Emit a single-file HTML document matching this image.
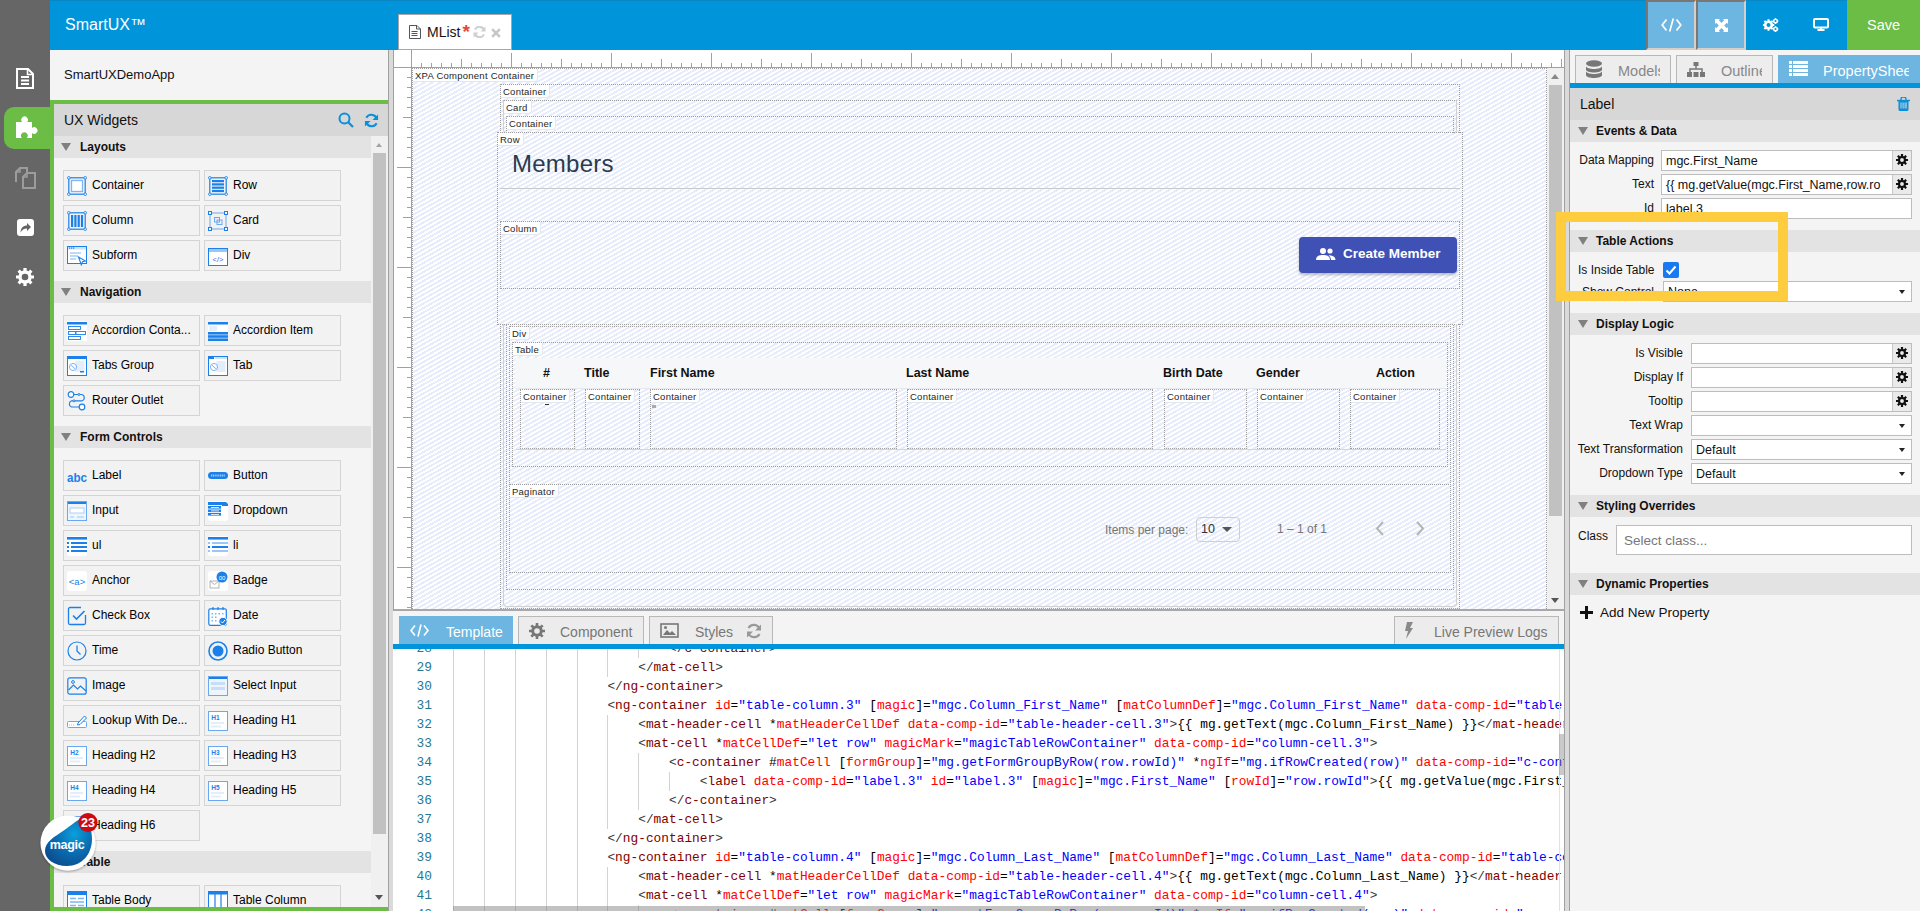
<!DOCTYPE html><html><head><meta charset="utf-8"><style>
*{box-sizing:border-box;margin:0;padding:0}
html,body{width:1920px;height:911px;overflow:hidden;background:#f4f4f4;font-family:"Liberation Sans",sans-serif;color:#222;position:relative}
.a{position:absolute}
.t{position:absolute;white-space:nowrap;line-height:1}
.wi{position:absolute;width:137px;height:31px;border:1px solid #d4d4d4;background:#f2f2f2}
.wi span{position:absolute;left:28px;top:7px;font-size:12px;color:#000;white-space:nowrap;line-height:14px}
.wi svg{position:absolute;left:3px;top:5px}
.sh{position:absolute;left:54px;width:317px;height:22px;background:#e3e3e3}
.sh b{position:absolute;left:26px;top:4px;font-size:12px;color:#111;line-height:15px}
.tri{position:absolute;width:0;height:0;border-left:5.5px solid transparent;border-right:5.5px solid transparent;border-top:8px solid #808080}
.cl{position:absolute;font-size:9.5px;letter-spacing:.25px;line-height:12px;height:13px;color:#1e1e1e;background:#fff;padding:1px 3px 0 2px;border-right:1px solid #e3e8f3;border-bottom:1px solid #e3e8f3;border-radius:0 0 4px 0;white-space:nowrap}
.bx{position:absolute;border:1px dotted #a0a0a0}
.code{position:absolute;font-family:"Liberation Mono",monospace;font-size:12.83px;white-space:pre;line-height:19px;color:#000}
.ln{position:absolute;font-family:"Liberation Mono",monospace;font-size:12.83px;line-height:19px;color:#237893;text-align:right;width:40px}
.tg{color:#800000} .at{color:#ff0000} .av{color:#0000ff} .pn{color:#383838}
.pl{position:absolute;font-size:12px;color:#111;white-space:nowrap;line-height:14px;text-align:right}
.inp{position:absolute;background:#fff;border:1px solid #bdbdbd;height:21px}
.inp span{position:absolute;left:4px;top:3px;font-size:12.5px;line-height:14px;color:#111;white-space:nowrap}
.gb{position:absolute;right:0;top:0;width:19px;height:19px;background:#eaeaea;border-left:1px solid #c8c8c8}
.dd{position:absolute;right:6px;top:8px;width:0;height:0;border-left:3px solid transparent;border-right:3px solid transparent;border-top:4px solid #222}
.rh{position:absolute;left:1570px;width:350px;height:22px;background:#e3e3e3}
.rh b{position:absolute;left:26px;top:4px;font-size:12px;color:#111;line-height:15px}
</style></head><body>
<div class="a" style="left:0;top:0;width:1920px;height:50px;background:#0095da"></div>
<div class="a" style="left:50px;top:0;width:1870px;height:1px;background:#0a86c4"></div>
<div class="t" style="left:65px;top:17px;font-size:16px;color:#fff">SmartUX&trade;</div>
<div class="a" style="left:0;top:0;width:50px;height:911px;background:#666666"></div>
<div class="a" style="left:398px;top:14px;width:114px;height:36px;background:#fff;border:1px solid #aaa6a6"></div>
<svg class="a" style="left:409px;top:25px" width="12" height="14" viewBox="0 0 12 14"><path d="M.5.5h7.5l3.5 3.5v9.5H.5z" fill="#fff" stroke="#555" stroke-width="1"/><path d="M7.5.5v3.5h4" fill="none" stroke="#555" stroke-width="1"/><path d="M2.5 6.5h6M2.5 8.5h6M2.5 10.5h6" stroke="#555" stroke-width="1"/></svg>
<div class="t" style="left:427px;top:25px;font-size:14px;color:#1e1010">MList</div>
<div class="t" style="left:462.5px;top:21.5px;font-size:19px;color:#e2493b;font-weight:bold">*</div>
<svg class="a" style="left:473px;top:26px" width="13" height="12" viewBox="0 0 13 12"><path d="M11.3 4.6A5 5 0 0 0 2 3.6M1.7 7.4A5 5 0 0 0 11 8.4" fill="none" stroke="#cfcfcf" stroke-width="2"/><path d="M12.5 .5v5h-5zM.5 11.5v-5h5z" fill="#cfcfcf"/></svg>
<svg class="a" style="left:491px;top:28px" width="10" height="10" viewBox="0 0 10 10"><path d="M1.2 1.2l7.6 7.6M8.8 1.2L1.2 8.8" stroke="#c6c6c6" stroke-width="2.6"/></svg>
<div class="a" style="left:1646px;top:0;width:50px;height:50px;background:#6db6e1;border-top:2px solid #7a7674;border-left:2px solid #7a7674;border-right:2px solid #d6cfc9;border-bottom:2px solid #d6cfc9"></div>
<div class="a" style="left:1696px;top:0;width:50px;height:50px;background:#6db6e1;border-top:2px solid #7a7674;border-left:2px solid #7a7674;border-right:2px solid #d6cfc9;border-bottom:2px solid #d6cfc9"></div>
<svg class="a" style="left:1661px;top:18px" width="21" height="14" viewBox="0 0 21 14"><path d="M5.5 1.5L1.2 7l4.3 5.5M15.5 1.5L19.8 7l-4.3 5.5M12.3 .5L8.7 13.5" fill="none" stroke="#fff" stroke-width="1.7"/></svg>
<svg class="a" style="left:1715px;top:19px" width="13" height="13" viewBox="0 0 13 13"><path d="M0 0h5L3.8 1.2 6.5 3.9 9.2 1.2 8 0h5v5L11.8 3.8 9.1 6.5l2.7 2.7L13 8v5H8l1.2-1.2L6.5 9.1 3.8 11.8 5 13H0V8l1.2 1.2L3.9 6.5 1.2 3.8 0 5z" fill="#fff"/></svg>
<svg class="a" style="left:1763px;top:18px" width="16" height="14" viewBox="0 0 16 14"><circle cx="5.5" cy="7" r="3.3" fill="none" stroke="#fff" stroke-width="2.6"/><g stroke="#fff" stroke-width="2"><path d="M5.5 1.2v2M5.5 10.8v2M-.3 7h2M9.3 7h2M1.4 2.9l1.4 1.4M8.2 9.7l1.4 1.4M1.4 11.1l1.4-1.4M8.2 4.3l1.4-1.4"/></g><circle cx="12.5" cy="3" r="1.8" fill="none" stroke="#fff" stroke-width="1.5"/><g stroke="#fff" stroke-width="1"><path d="M12.5 0v1M12.5 5v1M9.5 3h1M14.5 3h1"/></g><circle cx="12.5" cy="11" r="1.8" fill="none" stroke="#fff" stroke-width="1.5"/><g stroke="#fff" stroke-width="1"><path d="M12.5 8v1M12.5 13v1M9.5 11h1M14.5 11h1"/></g></svg>
<svg class="a" style="left:1813px;top:18px" width="16" height="13" viewBox="0 0 16 13"><rect x="1" y="1" width="14" height="8.5" rx="1" fill="none" stroke="#fff" stroke-width="2"/><path d="M8 10v2M4.5 12h7" stroke="#fff" stroke-width="2"/></svg>
<div class="a" style="left:1847px;top:0;width:73px;height:50px;background:#6bbd46"></div>
<div class="t" style="left:1867px;top:18px;font-size:14.5px;color:#fff">Save</div>
<div class="a" style="left:4px;top:107px;width:50px;height:42px;background:#6bbd46;border-radius:10px 0 0 10px"></div>
<svg class="a" style="left:16px;top:68px" width="18" height="21" viewBox="0 0 18 21"><path d="M1 1h11l5 5v14H1z" fill="none" stroke="#fff" stroke-width="2"/><path d="M11.5 1v5.5H17" fill="none" stroke="#fff" stroke-width="1.5"/><path d="M5 9h8M5 12.5h8M5 16h8" stroke="#fff" stroke-width="2"/></svg>
<svg class="a" style="left:15px;top:116px" width="24" height="23" viewBox="0 0 24 23"><path d="M1 6h6.2A3.3 3.3 0 1 1 12 6h5v6a3.3 3.3 0 1 1 0 5v5h-5.3a3.3 3.3 0 1 0-4.7 0H1z" fill="#fff"/></svg>
<svg class="a" style="left:14px;top:167px" width="23" height="22" viewBox="0 0 23 22"><path d="M2 15V5l4-4h7v5" fill="none" stroke="#9c9c9c" stroke-width="2"/><path d="M6 1v4H2" fill="none" stroke="#9c9c9c" stroke-width="1.5"/><path d="M9 21V10l4-4h8v15z" fill="none" stroke="#9c9c9c" stroke-width="2"/><path d="M13 6v4H9" fill="none" stroke="#9c9c9c" stroke-width="1.5"/></svg>
<svg class="a" style="left:17px;top:219px" width="17" height="17" viewBox="0 0 17 17"><rect x="0" y="0" width="17" height="17" rx="3" fill="#fff"/><path d="M3.5 13.5c.3-4.5 2.7-7 6.5-7V4l4 4-4 4V9.5c-3 0-5 1.3-6.5 4z" fill="#646464"/></svg>
<svg class="a" style="left:16px;top:268px" width="18" height="18" viewBox="0 0 18 18"><circle cx="9" cy="9" r="5" fill="none" stroke="#fff" stroke-width="3.4"/><g stroke="#fff" stroke-width="3.2"><path d="M9 0v4M9 14v4M0 9h4M14 9h4M2.6 2.6l2.8 2.8M12.6 12.6l2.8 2.8M2.6 15.4l2.8-2.8M12.6 5.4l2.8-2.8"/></g></svg>
<div class="t" style="left:64px;top:68px;font-size:13px;color:#111">SmartUXDemoApp</div>
<div class="a" style="left:50px;top:100px;width:338px;height:811px;border:4px solid #6bbd46;border-right:none"></div>
<div class="a" style="left:54px;top:104px;width:334px;height:32px;background:#d7d7d7"></div>
<div class="t" style="left:64px;top:113px;font-size:14px;color:#111">UX Widgets</div>
<svg class="a" style="left:338px;top:112px" width="16" height="16" viewBox="0 0 16 16"><circle cx="6.5" cy="6.5" r="5" fill="none" stroke="#0a8fdc" stroke-width="2"/><path d="M10 10l5 5" stroke="#0a8fdc" stroke-width="2.2"/></svg>
<svg class="a" style="left:364px;top:113px" width="15" height="15" viewBox="0 0 16 16"><path d="M13.5 6A6 6 0 0 0 2.5 5M2.5 10a6 6 0 0 0 11 1" fill="none" stroke="#0a8fdc" stroke-width="2.2"/><path d="M15 1.5v6h-6zM1 14.5v-6h6z" fill="#0a8fdc"/></svg>
<div class="a" style="left:371px;top:136px;width:17px;height:771px;background:#f0f0f0"></div>
<div class="a" style="left:373px;top:153px;width:13px;height:681px;background:#c1c1c1"></div>
<div class="a" style="left:376px;top:143px;width:0;height:0;border-left:3.5px solid transparent;border-right:3.5px solid transparent;border-bottom:4px solid #a3a3a3"></div>
<div class="a" style="left:375px;top:895px;width:0;height:0;border-left:4px solid transparent;border-right:4px solid transparent;border-top:5px solid #555"></div>
<div class="a" style="left:54px;top:136px;width:317px;height:771px;overflow:hidden">
<div class="sh" style="left:0;top:0px"><div class="tri" style="left:7px;top:7px"></div><b>Layouts</b></div>
<div class="wi" style="left:9px;top:34px"><svg width="20" height="20" viewBox="0 0 20 20"><rect x="1.8" y="1.8" width="16.4" height="16.4" fill="none" stroke="#1b80ea" stroke-width="1.2"/><rect x="4.5" y="4.5" width="11" height="11" fill="#fff" stroke="#7fb5f2" stroke-width="1.3"/><g fill="#fff" stroke="#1b80ea" stroke-width="0.9"><circle cx="1.8" cy="1.8" r="1.3"/><circle cx="18.2" cy="1.8" r="1.3"/><circle cx="1.8" cy="18.2" r="1.3"/><circle cx="18.2" cy="18.2" r="1.3"/></g></svg><span>Container</span></div>
<div class="wi" style="left:150px;top:34px"><svg width="20" height="20" viewBox="0 0 20 20"><rect x="1.8" y="1.8" width="16.4" height="16.4" fill="none" stroke="#1b80ea" stroke-width="1.2"/><g fill="#1b80ea"><rect x="4" y="4" width="12" height="2.2"/><rect x="4" y="7.3" width="12" height="2.2"/><rect x="4" y="10.6" width="12" height="2.2"/><rect x="4" y="13.9" width="12" height="2.2"/></g><g fill="#fff" stroke="#1b80ea" stroke-width="0.9"><circle cx="1.8" cy="1.8" r="1.3"/><circle cx="18.2" cy="1.8" r="1.3"/><circle cx="1.8" cy="18.2" r="1.3"/><circle cx="18.2" cy="18.2" r="1.3"/></g></svg><span>Row</span></div>
<div class="wi" style="left:9px;top:69px"><svg width="20" height="20" viewBox="0 0 20 20"><rect x="1.8" y="1.8" width="16.4" height="16.4" fill="none" stroke="#1b80ea" stroke-width="1.2"/><g fill="#1b80ea"><rect x="4" y="4" width="2.2" height="12"/><rect x="7.3" y="4" width="2.2" height="12"/><rect x="10.6" y="4" width="2.2" height="12"/><rect x="13.9" y="4" width="2.2" height="12"/></g><g fill="#fff" stroke="#1b80ea" stroke-width="0.9"><circle cx="1.8" cy="1.8" r="1.3"/><circle cx="18.2" cy="1.8" r="1.3"/><circle cx="1.8" cy="18.2" r="1.3"/><circle cx="18.2" cy="18.2" r="1.3"/></g></svg><span>Column</span></div>
<div class="wi" style="left:150px;top:69px"><svg width="20" height="20" viewBox="0 0 20 20"><rect x="2" y="2" width="16" height="16" fill="none" stroke="#6aa8f0" stroke-width="1"/><g fill="#fff" stroke="#1b80ea" stroke-width="1"><rect x=".5" y=".5" width="3" height="3"/><rect x="16.5" y=".5" width="3" height="3"/><rect x=".5" y="16.5" width="3" height="3"/><rect x="16.5" y="16.5" width="3" height="3"/></g><rect x="6.5" y="6.5" width="5" height="4.5" fill="none" stroke="#6aa8f0"/><rect x="9" y="9" width="5" height="4.5" fill="none" stroke="#6aa8f0"/></svg><span>Card</span></div>
<div class="wi" style="left:9px;top:104px"><svg width="20" height="20" viewBox="0 0 20 20"><rect x=".5" y=".5" width="19" height="17" fill="#fff" stroke="#1b80ea"/><rect x="1" y="1" width="18" height="2.5" fill="#cfe2fb"/><g fill="#1b80ea"><rect x="2" y="1.5" width="1.2" height="1.2"/><rect x="4" y="1.5" width="1.2" height="1.2"/><rect x="6" y="1.5" width="1.2" height="1.2"/></g><path d="M3 7h11M3 10h8M3 13h6" stroke="#7fb5f2" stroke-width="1.2"/><path d="M11.5 11l7 4-3 .8-1.2 3z" fill="#fff" stroke="#1b80ea" stroke-width="1.1"/></svg><span>Subform</span></div>
<div class="wi" style="left:150px;top:104px"><svg width="20" height="20" viewBox="0 0 20 20"><rect x=".5" y="2.5" width="19" height="17" fill="#fff" stroke="#1b80ea"/><rect x="1" y="3" width="18" height="3" fill="#9cc6f5"/><text x="10" y="15.5" font-size="7.5" text-anchor="middle" fill="#4a63e0" font-family="Liberation Sans">&lt;/&gt;</text></svg><span>Div</span></div>
<div class="sh" style="left:0;top:145px"><div class="tri" style="left:7px;top:7px"></div><b>Navigation</b></div>
<div class="wi" style="left:9px;top:179px"><svg width="20" height="20" viewBox="0 0 20 20"><rect x="0" y="0" width="20" height="20" fill="#fff"/><rect x="0" y="1" width="20" height="2.5" fill="#1b80ea"/><g fill="none" stroke="#1b80ea" stroke-width="0.9"><rect x="1.5" y="5.5" width="12" height="3"/><rect x="1.5" y="10.5" width="7" height="3"/><rect x="9" y="10.5" width="9.5" height="3"/><rect x="1.5" y="15.5" width="12" height="3"/></g></svg><span>Accordion Conta...</span></div>
<div class="wi" style="left:150px;top:179px"><svg width="20" height="20" viewBox="0 0 20 20"><rect x="0" y="1" width="20" height="19" fill="#fff"/><rect x="0" y="1" width="20" height="2.5" fill="#1b80ea"/><rect x="1" y="5" width="8" height="5" fill="#e3eefc"/><g fill="#1b80ea"><rect x="0" y="11" width="20" height="2.6"/><rect x="0" y="14.2" width="20" height="2.6"/><rect x="0" y="17.4" width="20" height="2.6"/></g></svg><span>Accordion Item</span></div>
<div class="wi" style="left:9px;top:214px"><svg width="20" height="20" viewBox="0 0 20 20"><rect x=".5" y=".5" width="19" height="19" fill="#fff" stroke="#1b80ea"/><rect x="1" y="1" width="6" height="2" fill="#1b80ea"/><rect x="7" y="1" width="12" height="2" fill="#1b80ea"/><rect x="8.5" y="5" width="9" height="11" fill="#e3eefc"/><circle cx="6" cy="11" r="3.6" fill="none" stroke="#7fb5f2" stroke-width="1"/><path d="M4 9.5c2 0 2 3 4 3" fill="none" stroke="#7fb5f2"/><rect x="13" y="15" width="4" height="1.5" fill="#1b80ea"/></svg><span>Tabs Group</span></div>
<div class="wi" style="left:150px;top:214px"><svg width="20" height="20" viewBox="0 0 20 20"><rect x=".5" y=".5" width="19" height="19" fill="#fff" stroke="#1b80ea"/><rect x="1" y="1" width="5" height="2" fill="#1b80ea"/><rect x="7" y="1" width="12" height="2" fill="#cfe2fb"/><rect x="8.5" y="5" width="9" height="11" fill="#e3eefc"/><circle cx="6" cy="11" r="3.6" fill="none" stroke="#7fb5f2" stroke-width="1"/><path d="M4 9.5c2 0 2 3 4 3" fill="none" stroke="#7fb5f2"/></svg><span>Tab</span></div>
<div class="wi" style="left:9px;top:249px"><svg width="20" height="20" viewBox="0 0 20 20"><circle cx="4" cy="3.5" r="2.8" fill="#fff" stroke="#1b80ea" stroke-width="1.2"/><circle cx="15" cy="16" r="2.8" fill="#fff" stroke="#1b80ea" stroke-width="1.2"/><path d="M6.8 3.5H15a3.3 3.3 0 0 1 0 6.3H4.5a3.3 3.3 0 0 0 0 6.2h7.7" fill="none" stroke="#1b80ea" stroke-width="1.2"/><circle cx="7" cy="9.8" r="1" fill="#fff" stroke="#1b80ea"/><circle cx="12" cy="3.5" r="1" fill="#fff" stroke="#1b80ea"/></svg><span>Router Outlet</span></div>
<div class="sh" style="left:0;top:290px"><div class="tri" style="left:7px;top:7px"></div><b>Form Controls</b></div>
<div class="wi" style="left:9px;top:324px"><svg width="20" height="20" viewBox="0 0 20 20"><text x="0" y="15.5" font-size="12" font-weight="bold" fill="#1b80ea" font-family="Liberation Sans" textLength="20" lengthAdjust="spacingAndGlyphs">abc</text></svg><span>Label</span></div>
<div class="wi" style="left:150px;top:324px"><svg width="20" height="20" viewBox="0 0 20 20"><rect x="0" y="6" width="20" height="7" rx="3.5" fill="#1b80ea"/><path d="M3 9.5h14" stroke="#9cc6f5" stroke-width="2" stroke-dasharray="1.2 .6"/></svg><span>Button</span></div>
<div class="wi" style="left:9px;top:359px"><svg width="20" height="20" viewBox="0 0 20 20"><rect x=".5" y=".5" width="19" height="19" fill="#eef5fd" stroke="#6aa8f0"/><rect x="1" y="1" width="18" height="2" fill="#1b80ea"/><rect x="3" y="7" width="14" height="5" fill="#fff" stroke="#9cc6f5" stroke-width=".8"/><path d="M3 16h4M10 16h7" stroke="#9cc6f5"/></svg><span>Input</span></div>
<div class="wi" style="left:150px;top:359px"><svg width="20" height="20" viewBox="0 0 20 20"><rect x="0" y="0" width="20" height="20" rx="3" fill="#fff"/><g fill="#1b80ea"><rect x="0" y="1" width="14" height="3"/><rect x="0" y="5" width="13" height="2.6"/><rect x="0" y="8.5" width="13" height="2.6"/><rect x="0" y="12" width="13" height="2.6"/></g><path d="M14 1h4l2 2v2h-6z" fill="#1b80ea"/><g fill="#fff"><rect x="3" y="6" width="8" height=".8"/><rect x="3" y="9.5" width="8" height=".8"/><rect x="3" y="13" width="8" height=".8"/></g></svg><span>Dropdown</span></div>
<div class="wi" style="left:9px;top:394px"><svg width="20" height="20" viewBox="0 0 20 20"><rect x="0" y="0" width="20" height="20" rx="3" fill="#fff"/><rect x="0" y="1" width="20" height="2.6" fill="#1b80ea"/><g fill="#1b80ea"><rect x="0" y="6" width="2" height="2"/><rect x="4" y="6" width="16" height="2"/><rect x="0" y="14" width="2" height="2"/><rect x="4" y="14" width="16" height="2"/></g><g fill="#1b80ea"><rect x="0" y="10" width="2" height="2"/><rect x="4" y="10" width="16" height="2"/></g></svg><span>ul</span></div>
<div class="wi" style="left:150px;top:394px"><svg width="20" height="20" viewBox="0 0 20 20"><rect x="0" y="0" width="20" height="20" rx="3" fill="#fff"/><rect x="0" y="1" width="20" height="2.6" fill="#1b80ea"/><g fill="#9cc6f5"><rect x="0" y="6" width="2" height="2"/><rect x="4" y="6" width="16" height="2"/><rect x="0" y="14" width="2" height="2"/><rect x="4" y="14" width="16" height="2"/></g><g fill="#1b80ea"><rect x="0" y="10" width="2" height="2"/><rect x="4" y="10" width="16" height="2"/></g></svg><span>li</span></div>
<div class="wi" style="left:9px;top:429px"><svg width="20" height="20" viewBox="0 0 20 20"><rect x="0" y="0" width="20" height="20" rx="3" fill="#fff"/><text x="10" y="14" font-size="9.5" text-anchor="middle" fill="#1b80ea" font-family="Liberation Sans">&lt;a&gt;</text></svg><span>Anchor</span></div>
<div class="wi" style="left:150px;top:429px"><svg width="20" height="20" viewBox="0 0 20 20"><rect x="0" y="0" width="20" height="20" rx="3" fill="#fff"/><rect x="2" y="10" width="9" height="7" fill="none" stroke="#aaa" stroke-width="0.9"/><path d="M2 10l4.5 3.5L11 10" fill="none" stroke="#aaa" stroke-width=".9"/><circle cx="14" cy="6" r="5.5" fill="#1b80ea"/><text x="14" y="8.5" font-size="6" text-anchor="middle" fill="#fff" font-family="Liberation Sans">00</text></svg><span>Badge</span></div>
<div class="wi" style="left:9px;top:464px"><svg width="20" height="20" viewBox="0 0 20 20"><path d="M14 1.5H3A1.5 1.5 0 0 0 1.5 3v14A1.5 1.5 0 0 0 3 18.5h14a1.5 1.5 0 0 0 1.5-1.5V9" fill="none" stroke="#1b80ea" stroke-width="1.3"/><path d="M6 9.5l3.5 3.5 8-8" fill="none" stroke="#1b80ea" stroke-width="1.6"/></svg><span>Check Box</span></div>
<div class="wi" style="left:150px;top:464px"><svg width="20" height="20" viewBox="0 0 20 20"><rect x=".8" y="2.8" width="17.5" height="16.5" rx="1.5" fill="#fff" stroke="#1b80ea" stroke-width="1.2"/><path d="M5 1v3M10 1v3M15 1v3" stroke="#1b80ea" stroke-width="1.2"/><g fill="#7fb5f2"><rect x="3.5" y="7" width="1.5" height="1.5"/><rect x="7" y="7" width="1.5" height="1.5"/><rect x="10.5" y="7" width="1.5" height="1.5"/><rect x="14" y="7" width="1.5" height="1.5"/><rect x="3.5" y="10.5" width="1.5" height="1.5"/><rect x="7" y="10.5" width="1.5" height="1.5"/><rect x="3.5" y="14" width="1.5" height="1.5"/><rect x="7" y="14" width="1.5" height="1.5"/></g><circle cx="15" cy="15.5" r="4.2" fill="#1b80ea" stroke="#fff"/><path d="M13 15.5l1.5 1.5 2.5-3" fill="none" stroke="#fff" stroke-width="1"/></svg><span>Date</span></div>
<div class="wi" style="left:9px;top:499px"><svg width="20" height="20" viewBox="0 0 20 20"><circle cx="10" cy="10" r="9" fill="none" stroke="#1b80ea" stroke-width="1.2"/><path d="M10 4.5v5.5l3.5 3.5" fill="none" stroke="#1b80ea" stroke-width="1.3"/></svg><span>Time</span></div>
<div class="wi" style="left:150px;top:499px"><svg width="20" height="20" viewBox="0 0 20 20"><circle cx="10" cy="10" r="9" fill="none" stroke="#1b80ea" stroke-width="1.6"/><circle cx="10" cy="10" r="5.5" fill="#1b80ea"/></svg><span>Radio Button</span></div>
<div class="wi" style="left:9px;top:534px"><svg width="20" height="20" viewBox="0 0 20 20"><rect x=".8" y="1.8" width="18.4" height="16.4" rx="2" fill="none" stroke="#1b80ea" stroke-width="1.2"/><path d="M1.5 14l5-5 4 4 3-3 5.5 5" fill="none" stroke="#1b80ea" stroke-width="1.2"/><circle cx="6" cy="6" r="1.4" fill="none" stroke="#1b80ea"/></svg><span>Image</span></div>
<div class="wi" style="left:150px;top:534px"><svg width="20" height="20" viewBox="0 0 20 20"><rect x=".5" y=".5" width="19" height="19" fill="#eef5fd" stroke="#6aa8f0"/><rect x="1" y="1" width="18" height="2" fill="#1b80ea"/><rect x="3" y="6" width="14" height="3" fill="#c7ddf8"/><rect x="3" y="11" width="14" height="3" fill="#c7ddf8"/></svg><span>Select Input</span></div>
<div class="wi" style="left:9px;top:569px"><svg width="20" height="20" viewBox="0 0 20 20"><rect x=".5" y="10.5" width="19" height="6" rx="1" fill="#fff" stroke="#6aa8f0"/><path d="M2 14h6" stroke="#9cc6f5" stroke-dasharray="1 1"/><path d="M11 12l6.5-7 2 2-6.5 6.5-2.5.5z" fill="#fff" stroke="#1b80ea"/></svg><span>Lookup With De...</span></div>
<div class="wi" style="left:150px;top:569px"><svg width="20" height="20" viewBox="0 0 20 20"><rect x=".5" y=".5" width="19" height="19" fill="#fff" stroke="#6aa8f0"/><text x="7.5" y="8.5" font-size="6.5" font-weight="bold" text-anchor="middle" fill="#1b80ea" font-family="Liberation Sans">H1</text><rect x="3" y="11" width="13" height="2" fill="#e3eefc"/><rect x="3" y="14.5" width="10" height="2" fill="#e3eefc"/></svg><span>Heading H1</span></div>
<div class="wi" style="left:9px;top:604px"><svg width="20" height="20" viewBox="0 0 20 20"><rect x=".5" y=".5" width="19" height="19" fill="#fff" stroke="#6aa8f0"/><text x="7.5" y="8.5" font-size="6.5" font-weight="bold" text-anchor="middle" fill="#1b80ea" font-family="Liberation Sans">H2</text><rect x="3" y="11" width="13" height="2" fill="#e3eefc"/><rect x="3" y="14.5" width="10" height="2" fill="#e3eefc"/></svg><span>Heading H2</span></div>
<div class="wi" style="left:150px;top:604px"><svg width="20" height="20" viewBox="0 0 20 20"><rect x=".5" y=".5" width="19" height="19" fill="#fff" stroke="#6aa8f0"/><text x="7.5" y="8.5" font-size="6.5" font-weight="bold" text-anchor="middle" fill="#1b80ea" font-family="Liberation Sans">H3</text><rect x="3" y="11" width="13" height="2" fill="#e3eefc"/><rect x="3" y="14.5" width="10" height="2" fill="#e3eefc"/></svg><span>Heading H3</span></div>
<div class="wi" style="left:9px;top:639px"><svg width="20" height="20" viewBox="0 0 20 20"><rect x=".5" y=".5" width="19" height="19" fill="#fff" stroke="#6aa8f0"/><text x="7.5" y="8.5" font-size="6.5" font-weight="bold" text-anchor="middle" fill="#1b80ea" font-family="Liberation Sans">H4</text><rect x="3" y="11" width="13" height="2" fill="#e3eefc"/><rect x="3" y="14.5" width="10" height="2" fill="#e3eefc"/></svg><span>Heading H4</span></div>
<div class="wi" style="left:150px;top:639px"><svg width="20" height="20" viewBox="0 0 20 20"><rect x=".5" y=".5" width="19" height="19" fill="#fff" stroke="#6aa8f0"/><text x="7.5" y="8.5" font-size="6.5" font-weight="bold" text-anchor="middle" fill="#1b80ea" font-family="Liberation Sans">H5</text><rect x="3" y="11" width="13" height="2" fill="#e3eefc"/><rect x="3" y="14.5" width="10" height="2" fill="#e3eefc"/></svg><span>Heading H5</span></div>
<div class="wi" style="left:9px;top:674px"><svg width="20" height="20" viewBox="0 0 20 20"><rect x=".5" y=".5" width="19" height="19" fill="#fff" stroke="#6aa8f0"/><text x="7.5" y="8.5" font-size="6.5" font-weight="bold" text-anchor="middle" fill="#1b80ea" font-family="Liberation Sans">H6</text><rect x="3" y="11" width="13" height="2" fill="#e3eefc"/><rect x="3" y="14.5" width="10" height="2" fill="#e3eefc"/></svg><span>Heading H6</span></div>
<div class="sh" style="left:0;top:715px"><div class="tri" style="left:7px;top:7px"></div><b>Table</b></div>
<div class="wi" style="left:9px;top:749px"><svg width="20" height="20" viewBox="0 0 20 20"><rect x=".5" y=".5" width="19" height="19" fill="#fff" stroke="#1b80ea"/><rect x="1" y="1" width="18" height="3" fill="#1b80ea"/><path d="M3 7.5h6M11 7.5h6M3 11h14M3 14.5h6M11 14.5h6" stroke="#7fb5f2" stroke-width="1.5"/></svg><span>Table Body</span></div>
<div class="wi" style="left:150px;top:749px"><svg width="20" height="20" viewBox="0 0 20 20"><rect x=".5" y=".5" width="19" height="19" fill="#fff" stroke="#1b80ea"/><rect x="1" y="1" width="18" height="2.5" fill="#1b80ea"/><path d="M7 3v16M13 3v16" stroke="#1b80ea" stroke-width="1.2"/></svg><span>Table Column</span></div>
</div>
<svg class="a" style="left:36px;top:808px" width="70" height="70" viewBox="0 0 70 70"><defs><radialGradient id="mg" cx="62%" cy="35%" r="70%"><stop offset="0" stop-color="#0aa0dc"/><stop offset=".55" stop-color="#0a6cb0"/><stop offset="1" stop-color="#0b4f91"/></radialGradient><filter id="sh" x="-20%" y="-20%" width="140%" height="140%"><feDropShadow dx="0" dy="1" stdDeviation="1.2" flood-opacity=".35"/></filter></defs><circle cx="32" cy="35" r="27.5" fill="#fff" filter="url(#sh)"/><path d="M48 9c5 6 8 13 8 22 0 15-10 27-25 27C18 58 9 51 9 43c0-9 9-14 18-20C36 17 42 11 48 9z" fill="url(#mg)"/><text x="31" y="40.5" font-size="12.5" font-weight="bold" text-anchor="middle" fill="#fff" font-family="Liberation Sans" letter-spacing="-.3">magic</text><circle cx="52" cy="14.5" r="9.6" fill="#cc0a12"/><text x="52" y="19" font-size="12.5" font-weight="bold" text-anchor="middle" fill="#fff" font-family="Liberation Sans">23</text></svg>
<div class="a" style="left:388px;top:50px;width:6px;height:861px;background:#dadada;border-left:1px solid #a0a0a0;border-right:1px solid #a0a0a0"></div>
<div class="a" style="left:394px;top:50px;width:1170px;height:559px;background:#fff;overflow:hidden">
<svg class="a" style="left:19px;top:19px" width="1134" height="540"><defs><pattern id="st" width="16" height="9" patternUnits="userSpaceOnUse"><g fill="#e6ecfc" shape-rendering="crispEdges"><rect x="0" y="0" width="4" height="1"/><rect x="8" y="0" width="4" height="1"/><rect x="0" y="1" width="3" height="1"/><rect x="7" y="1" width="4" height="1"/><rect x="15" y="1" width="1" height="1"/><rect x="0" y="2" width="1" height="1"/><rect x="5" y="2" width="4" height="1"/><rect x="13" y="2" width="3" height="1"/><rect x="3" y="3" width="4" height="1"/><rect x="11" y="3" width="4" height="1"/><rect x="1" y="4" width="4" height="1"/><rect x="9" y="4" width="4" height="1"/><rect x="0" y="5" width="4" height="1"/><rect x="8" y="5" width="4" height="1"/><rect x="0" y="6" width="2" height="1"/><rect x="6" y="6" width="4" height="1"/><rect x="14" y="6" width="2" height="1"/><rect x="4" y="7" width="4" height="1"/><rect x="12" y="7" width="4" height="1"/><rect x="2" y="8" width="4" height="1"/><rect x="10" y="8" width="4" height="1"/></g></pattern></defs><rect width="1134" height="540" fill="url(#st)"/></svg>
<div class="a" style="left:27px;top:13px;width:1px;height:4px;background:#a0a0a0"></div><div class="a" style="left:37px;top:13px;width:1px;height:4px;background:#a0a0a0"></div><div class="a" style="left:47px;top:13px;width:1px;height:4px;background:#a0a0a0"></div><div class="a" style="left:57px;top:13px;width:1px;height:4px;background:#a0a0a0"></div><div class="a" style="left:67px;top:9px;width:1px;height:8px;background:#a0a0a0"></div><div class="a" style="left:77px;top:13px;width:1px;height:4px;background:#a0a0a0"></div><div class="a" style="left:87px;top:13px;width:1px;height:4px;background:#a0a0a0"></div><div class="a" style="left:97px;top:13px;width:1px;height:4px;background:#a0a0a0"></div><div class="a" style="left:107px;top:13px;width:1px;height:4px;background:#a0a0a0"></div><div class="a" style="left:117px;top:3px;width:1px;height:14px;background:#a0a0a0"></div><div class="a" style="left:127px;top:13px;width:1px;height:4px;background:#a0a0a0"></div><div class="a" style="left:137px;top:13px;width:1px;height:4px;background:#a0a0a0"></div><div class="a" style="left:147px;top:13px;width:1px;height:4px;background:#a0a0a0"></div><div class="a" style="left:157px;top:13px;width:1px;height:4px;background:#a0a0a0"></div><div class="a" style="left:167px;top:9px;width:1px;height:8px;background:#a0a0a0"></div><div class="a" style="left:177px;top:13px;width:1px;height:4px;background:#a0a0a0"></div><div class="a" style="left:187px;top:13px;width:1px;height:4px;background:#a0a0a0"></div><div class="a" style="left:197px;top:13px;width:1px;height:4px;background:#a0a0a0"></div><div class="a" style="left:207px;top:13px;width:1px;height:4px;background:#a0a0a0"></div><div class="a" style="left:217px;top:3px;width:1px;height:14px;background:#a0a0a0"></div><div class="a" style="left:227px;top:13px;width:1px;height:4px;background:#a0a0a0"></div><div class="a" style="left:237px;top:13px;width:1px;height:4px;background:#a0a0a0"></div><div class="a" style="left:247px;top:13px;width:1px;height:4px;background:#a0a0a0"></div><div class="a" style="left:257px;top:13px;width:1px;height:4px;background:#a0a0a0"></div><div class="a" style="left:267px;top:9px;width:1px;height:8px;background:#a0a0a0"></div><div class="a" style="left:277px;top:13px;width:1px;height:4px;background:#a0a0a0"></div><div class="a" style="left:287px;top:13px;width:1px;height:4px;background:#a0a0a0"></div><div class="a" style="left:297px;top:13px;width:1px;height:4px;background:#a0a0a0"></div><div class="a" style="left:307px;top:13px;width:1px;height:4px;background:#a0a0a0"></div><div class="a" style="left:317px;top:3px;width:1px;height:14px;background:#a0a0a0"></div><div class="a" style="left:327px;top:13px;width:1px;height:4px;background:#a0a0a0"></div><div class="a" style="left:337px;top:13px;width:1px;height:4px;background:#a0a0a0"></div><div class="a" style="left:347px;top:13px;width:1px;height:4px;background:#a0a0a0"></div><div class="a" style="left:357px;top:13px;width:1px;height:4px;background:#a0a0a0"></div><div class="a" style="left:367px;top:9px;width:1px;height:8px;background:#a0a0a0"></div><div class="a" style="left:377px;top:13px;width:1px;height:4px;background:#a0a0a0"></div><div class="a" style="left:387px;top:13px;width:1px;height:4px;background:#a0a0a0"></div><div class="a" style="left:397px;top:13px;width:1px;height:4px;background:#a0a0a0"></div><div class="a" style="left:407px;top:13px;width:1px;height:4px;background:#a0a0a0"></div><div class="a" style="left:417px;top:3px;width:1px;height:14px;background:#a0a0a0"></div><div class="a" style="left:427px;top:13px;width:1px;height:4px;background:#a0a0a0"></div><div class="a" style="left:437px;top:13px;width:1px;height:4px;background:#a0a0a0"></div><div class="a" style="left:447px;top:13px;width:1px;height:4px;background:#a0a0a0"></div><div class="a" style="left:457px;top:13px;width:1px;height:4px;background:#a0a0a0"></div><div class="a" style="left:467px;top:9px;width:1px;height:8px;background:#a0a0a0"></div><div class="a" style="left:477px;top:13px;width:1px;height:4px;background:#a0a0a0"></div><div class="a" style="left:487px;top:13px;width:1px;height:4px;background:#a0a0a0"></div><div class="a" style="left:497px;top:13px;width:1px;height:4px;background:#a0a0a0"></div><div class="a" style="left:507px;top:13px;width:1px;height:4px;background:#a0a0a0"></div><div class="a" style="left:517px;top:3px;width:1px;height:14px;background:#a0a0a0"></div><div class="a" style="left:527px;top:13px;width:1px;height:4px;background:#a0a0a0"></div><div class="a" style="left:537px;top:13px;width:1px;height:4px;background:#a0a0a0"></div><div class="a" style="left:547px;top:13px;width:1px;height:4px;background:#a0a0a0"></div><div class="a" style="left:557px;top:13px;width:1px;height:4px;background:#a0a0a0"></div><div class="a" style="left:567px;top:9px;width:1px;height:8px;background:#a0a0a0"></div><div class="a" style="left:577px;top:13px;width:1px;height:4px;background:#a0a0a0"></div><div class="a" style="left:587px;top:13px;width:1px;height:4px;background:#a0a0a0"></div><div class="a" style="left:597px;top:13px;width:1px;height:4px;background:#a0a0a0"></div><div class="a" style="left:607px;top:13px;width:1px;height:4px;background:#a0a0a0"></div><div class="a" style="left:617px;top:3px;width:1px;height:14px;background:#a0a0a0"></div><div class="a" style="left:627px;top:13px;width:1px;height:4px;background:#a0a0a0"></div><div class="a" style="left:637px;top:13px;width:1px;height:4px;background:#a0a0a0"></div><div class="a" style="left:647px;top:13px;width:1px;height:4px;background:#a0a0a0"></div><div class="a" style="left:657px;top:13px;width:1px;height:4px;background:#a0a0a0"></div><div class="a" style="left:667px;top:9px;width:1px;height:8px;background:#a0a0a0"></div><div class="a" style="left:677px;top:13px;width:1px;height:4px;background:#a0a0a0"></div><div class="a" style="left:687px;top:13px;width:1px;height:4px;background:#a0a0a0"></div><div class="a" style="left:697px;top:13px;width:1px;height:4px;background:#a0a0a0"></div><div class="a" style="left:707px;top:13px;width:1px;height:4px;background:#a0a0a0"></div><div class="a" style="left:717px;top:3px;width:1px;height:14px;background:#a0a0a0"></div><div class="a" style="left:727px;top:13px;width:1px;height:4px;background:#a0a0a0"></div><div class="a" style="left:737px;top:13px;width:1px;height:4px;background:#a0a0a0"></div><div class="a" style="left:747px;top:13px;width:1px;height:4px;background:#a0a0a0"></div><div class="a" style="left:757px;top:13px;width:1px;height:4px;background:#a0a0a0"></div><div class="a" style="left:767px;top:9px;width:1px;height:8px;background:#a0a0a0"></div><div class="a" style="left:777px;top:13px;width:1px;height:4px;background:#a0a0a0"></div><div class="a" style="left:787px;top:13px;width:1px;height:4px;background:#a0a0a0"></div><div class="a" style="left:797px;top:13px;width:1px;height:4px;background:#a0a0a0"></div><div class="a" style="left:807px;top:13px;width:1px;height:4px;background:#a0a0a0"></div><div class="a" style="left:817px;top:3px;width:1px;height:14px;background:#a0a0a0"></div><div class="a" style="left:827px;top:13px;width:1px;height:4px;background:#a0a0a0"></div><div class="a" style="left:837px;top:13px;width:1px;height:4px;background:#a0a0a0"></div><div class="a" style="left:847px;top:13px;width:1px;height:4px;background:#a0a0a0"></div><div class="a" style="left:857px;top:13px;width:1px;height:4px;background:#a0a0a0"></div><div class="a" style="left:867px;top:9px;width:1px;height:8px;background:#a0a0a0"></div><div class="a" style="left:877px;top:13px;width:1px;height:4px;background:#a0a0a0"></div><div class="a" style="left:887px;top:13px;width:1px;height:4px;background:#a0a0a0"></div><div class="a" style="left:897px;top:13px;width:1px;height:4px;background:#a0a0a0"></div><div class="a" style="left:907px;top:13px;width:1px;height:4px;background:#a0a0a0"></div><div class="a" style="left:917px;top:3px;width:1px;height:14px;background:#a0a0a0"></div><div class="a" style="left:927px;top:13px;width:1px;height:4px;background:#a0a0a0"></div><div class="a" style="left:937px;top:13px;width:1px;height:4px;background:#a0a0a0"></div><div class="a" style="left:947px;top:13px;width:1px;height:4px;background:#a0a0a0"></div><div class="a" style="left:957px;top:13px;width:1px;height:4px;background:#a0a0a0"></div><div class="a" style="left:967px;top:9px;width:1px;height:8px;background:#a0a0a0"></div><div class="a" style="left:977px;top:13px;width:1px;height:4px;background:#a0a0a0"></div><div class="a" style="left:987px;top:13px;width:1px;height:4px;background:#a0a0a0"></div><div class="a" style="left:997px;top:13px;width:1px;height:4px;background:#a0a0a0"></div><div class="a" style="left:1007px;top:13px;width:1px;height:4px;background:#a0a0a0"></div><div class="a" style="left:1017px;top:3px;width:1px;height:14px;background:#a0a0a0"></div><div class="a" style="left:1027px;top:13px;width:1px;height:4px;background:#a0a0a0"></div><div class="a" style="left:1037px;top:13px;width:1px;height:4px;background:#a0a0a0"></div><div class="a" style="left:1047px;top:13px;width:1px;height:4px;background:#a0a0a0"></div><div class="a" style="left:1057px;top:13px;width:1px;height:4px;background:#a0a0a0"></div><div class="a" style="left:1067px;top:9px;width:1px;height:8px;background:#a0a0a0"></div><div class="a" style="left:1077px;top:13px;width:1px;height:4px;background:#a0a0a0"></div><div class="a" style="left:1087px;top:13px;width:1px;height:4px;background:#a0a0a0"></div><div class="a" style="left:1097px;top:13px;width:1px;height:4px;background:#a0a0a0"></div><div class="a" style="left:1107px;top:13px;width:1px;height:4px;background:#a0a0a0"></div><div class="a" style="left:1117px;top:3px;width:1px;height:14px;background:#a0a0a0"></div><div class="a" style="left:1127px;top:13px;width:1px;height:4px;background:#a0a0a0"></div><div class="a" style="left:1137px;top:13px;width:1px;height:4px;background:#a0a0a0"></div><div class="a" style="left:1147px;top:13px;width:1px;height:4px;background:#a0a0a0"></div><div class="a" style="left:1157px;top:13px;width:1px;height:4px;background:#a0a0a0"></div><div class="a" style="left:1167px;top:9px;width:1px;height:8px;background:#a0a0a0"></div>
<div class="a" style="left:0;top:17px;width:1170px;height:1px;background:#a0a0a0"></div>
<div class="a" style="left:13px;top:27px;width:4px;height:1px;background:#a0a0a0"></div><div class="a" style="left:13px;top:37px;width:4px;height:1px;background:#a0a0a0"></div><div class="a" style="left:13px;top:47px;width:4px;height:1px;background:#a0a0a0"></div><div class="a" style="left:13px;top:57px;width:4px;height:1px;background:#a0a0a0"></div><div class="a" style="left:9px;top:67px;width:8px;height:1px;background:#a0a0a0"></div><div class="a" style="left:13px;top:77px;width:4px;height:1px;background:#a0a0a0"></div><div class="a" style="left:13px;top:87px;width:4px;height:1px;background:#a0a0a0"></div><div class="a" style="left:13px;top:97px;width:4px;height:1px;background:#a0a0a0"></div><div class="a" style="left:13px;top:107px;width:4px;height:1px;background:#a0a0a0"></div><div class="a" style="left:3px;top:117px;width:14px;height:1px;background:#a0a0a0"></div><div class="a" style="left:13px;top:127px;width:4px;height:1px;background:#a0a0a0"></div><div class="a" style="left:13px;top:137px;width:4px;height:1px;background:#a0a0a0"></div><div class="a" style="left:13px;top:147px;width:4px;height:1px;background:#a0a0a0"></div><div class="a" style="left:13px;top:157px;width:4px;height:1px;background:#a0a0a0"></div><div class="a" style="left:9px;top:167px;width:8px;height:1px;background:#a0a0a0"></div><div class="a" style="left:13px;top:177px;width:4px;height:1px;background:#a0a0a0"></div><div class="a" style="left:13px;top:187px;width:4px;height:1px;background:#a0a0a0"></div><div class="a" style="left:13px;top:197px;width:4px;height:1px;background:#a0a0a0"></div><div class="a" style="left:13px;top:207px;width:4px;height:1px;background:#a0a0a0"></div><div class="a" style="left:3px;top:217px;width:14px;height:1px;background:#a0a0a0"></div><div class="a" style="left:13px;top:227px;width:4px;height:1px;background:#a0a0a0"></div><div class="a" style="left:13px;top:237px;width:4px;height:1px;background:#a0a0a0"></div><div class="a" style="left:13px;top:247px;width:4px;height:1px;background:#a0a0a0"></div><div class="a" style="left:13px;top:257px;width:4px;height:1px;background:#a0a0a0"></div><div class="a" style="left:9px;top:267px;width:8px;height:1px;background:#a0a0a0"></div><div class="a" style="left:13px;top:277px;width:4px;height:1px;background:#a0a0a0"></div><div class="a" style="left:13px;top:287px;width:4px;height:1px;background:#a0a0a0"></div><div class="a" style="left:13px;top:297px;width:4px;height:1px;background:#a0a0a0"></div><div class="a" style="left:13px;top:307px;width:4px;height:1px;background:#a0a0a0"></div><div class="a" style="left:3px;top:317px;width:14px;height:1px;background:#a0a0a0"></div><div class="a" style="left:13px;top:327px;width:4px;height:1px;background:#a0a0a0"></div><div class="a" style="left:13px;top:337px;width:4px;height:1px;background:#a0a0a0"></div><div class="a" style="left:13px;top:347px;width:4px;height:1px;background:#a0a0a0"></div><div class="a" style="left:13px;top:357px;width:4px;height:1px;background:#a0a0a0"></div><div class="a" style="left:9px;top:367px;width:8px;height:1px;background:#a0a0a0"></div><div class="a" style="left:13px;top:377px;width:4px;height:1px;background:#a0a0a0"></div><div class="a" style="left:13px;top:387px;width:4px;height:1px;background:#a0a0a0"></div><div class="a" style="left:13px;top:397px;width:4px;height:1px;background:#a0a0a0"></div><div class="a" style="left:13px;top:407px;width:4px;height:1px;background:#a0a0a0"></div><div class="a" style="left:3px;top:417px;width:14px;height:1px;background:#a0a0a0"></div><div class="a" style="left:13px;top:427px;width:4px;height:1px;background:#a0a0a0"></div><div class="a" style="left:13px;top:437px;width:4px;height:1px;background:#a0a0a0"></div><div class="a" style="left:13px;top:447px;width:4px;height:1px;background:#a0a0a0"></div><div class="a" style="left:13px;top:457px;width:4px;height:1px;background:#a0a0a0"></div><div class="a" style="left:9px;top:467px;width:8px;height:1px;background:#a0a0a0"></div><div class="a" style="left:13px;top:477px;width:4px;height:1px;background:#a0a0a0"></div><div class="a" style="left:13px;top:487px;width:4px;height:1px;background:#a0a0a0"></div><div class="a" style="left:13px;top:497px;width:4px;height:1px;background:#a0a0a0"></div><div class="a" style="left:13px;top:507px;width:4px;height:1px;background:#a0a0a0"></div><div class="a" style="left:3px;top:517px;width:14px;height:1px;background:#a0a0a0"></div><div class="a" style="left:13px;top:527px;width:4px;height:1px;background:#a0a0a0"></div><div class="a" style="left:13px;top:537px;width:4px;height:1px;background:#a0a0a0"></div><div class="a" style="left:13px;top:547px;width:4px;height:1px;background:#a0a0a0"></div><div class="a" style="left:13px;top:557px;width:4px;height:1px;background:#a0a0a0"></div><div class="a" style="left:9px;top:567px;width:8px;height:1px;background:#a0a0a0"></div>
<div class="a" style="left:17px;top:0;width:1px;height:559px;background:#a0a0a0"></div>
<div class="a" style="left:1153px;top:18px;width:17px;height:541px;background:#f0f0f0"></div>
<div class="a" style="left:1155px;top:35px;width:13px;height:431px;background:#c1c1c1"></div>
<div class="a" style="left:1157px;top:24px;width:0;height:0;border-left:4px solid transparent;border-right:4px solid transparent;border-bottom:5px solid #888"></div>
<div class="a" style="left:1157px;top:548px;width:0;height:0;border-left:4px solid transparent;border-right:4px solid transparent;border-top:5px solid #555"></div>
</div>
<div class="a" style="left:394px;top:609px;width:1170px;height:2px;background:#a8a8a8"></div>
<div class="bx" style="left:412px;top:68px;width:1135px;height:541px;;border-bottom:none"></div>
<div class="cl" style="left:413px;top:69px;height:13px;padding-top:1px">XPA Component Container</div>
<div class="bx" style="left:500px;top:84px;width:960px;height:49px;;border-bottom:none"></div>
<div class="cl" style="left:501px;top:85px">Container</div>
<div class="bx" style="left:503px;top:100px;width:954px;height:33px;border:1px solid #d0d0d0;border-top:1px dotted #a0a0a0;border-radius:0 0 4px 4px;border-bottom:none"></div>
<div class="cl" style="left:504px;top:101px">Card</div>
<div class="bx" style="left:506px;top:116px;width:948px;height:17px;;border-bottom:none"></div>
<div class="cl" style="left:507px;top:117px">Container</div>
<div class="bx" style="left:497px;top:132px;width:966px;height:193px;"></div>
<div class="cl" style="left:498px;top:133px">Row</div>
<div class="t" style="left:512px;top:152px;font-size:24px;letter-spacing:.25px;color:#2c3a4c">Members</div>
<div class="a" style="left:500px;top:188px;width:960px;height:1px;background:#cbcbcb"></div>
<div class="bx" style="left:500px;top:221px;width:960px;height:68px;"></div>
<div class="cl" style="left:501px;top:222px">Column</div>
<div class="a" style="left:1299px;top:237px;width:158px;height:36px;background:#3f51b5;border-radius:4px;box-shadow:0 2px 3px rgba(0,0,0,.25)"></div>
<svg class="a" style="left:1316px;top:247px" width="20" height="14" viewBox="0 0 20 14"><circle cx="7" cy="4" r="3" fill="#fff"/><circle cx="14" cy="4" r="2.6" fill="#fff"/><path d="M0 13c0-4 3-5 7-5s7 1 7 5z" fill="#fff"/><path d="M12.5 8.2c3 0 7 .8 7 4.8h-4.5c0-2-1-3.6-2.5-4.8z" fill="#fff"/></svg>
<div class="t" style="left:1343px;top:247px;font-size:13.5px;font-weight:bold;color:#fff">Create Member</div>
<div class="bx" style="left:500px;top:324px;width:960px;height:285px;;border-top:none"></div>
<div class="bx" style="left:503px;top:324px;width:954px;height:283px;border:1px solid #d0d0d0;border-top:1px dotted #a0a0a0;border-radius:0 0 4px 4px;border-top:none"></div>
<div class="bx" style="left:506px;top:325px;width:948px;height:265px;;border-top:none"></div>
<div class="bx" style="left:509px;top:326px;width:942px;height:247px;"></div>
<div class="cl" style="left:510px;top:327px">Div</div>
<div class="bx" style="left:512px;top:342px;width:936px;height:125px;"></div>
<div class="cl" style="left:513px;top:343px">Table</div>
<div class="a" style="left:515px;top:358px;width:931px;height:31px;background:#f6f7f9;border-bottom:1px solid #e6e8ee"></div>
<div class="t" style="left:543px;top:367px;font-size:12.5px;font-weight:bold;color:#111">#</div>
<div class="t" style="left:584px;top:367px;font-size:12.5px;font-weight:bold;color:#111">Title</div>
<div class="t" style="left:650px;top:367px;font-size:12.5px;font-weight:bold;color:#111">First Name</div>
<div class="t" style="left:906px;top:367px;font-size:12.5px;font-weight:bold;color:#111">Last Name</div>
<div class="t" style="left:1163px;top:367px;font-size:12.5px;font-weight:bold;color:#111">Birth Date</div>
<div class="t" style="left:1256px;top:367px;font-size:12.5px;font-weight:bold;color:#111">Gender</div>
<div class="t" style="left:1376px;top:367px;font-size:12.5px;font-weight:bold;color:#111">Action</div>
<div class="bx" style="left:520px;top:389px;width:55px;height:60px;"></div>
<div class="cl" style="left:521px;top:390px">Container</div>
<div class="bx" style="left:585px;top:389px;width:55px;height:60px;"></div>
<div class="cl" style="left:586px;top:390px">Container</div>
<div class="bx" style="left:650px;top:389px;width:247px;height:60px;"></div>
<div class="cl" style="left:651px;top:390px">Container</div>
<div class="bx" style="left:907px;top:389px;width:246px;height:60px;"></div>
<div class="cl" style="left:908px;top:390px">Container</div>
<div class="bx" style="left:1164px;top:389px;width:83px;height:60px;"></div>
<div class="cl" style="left:1165px;top:390px">Container</div>
<div class="bx" style="left:1257px;top:389px;width:83px;height:60px;"></div>
<div class="cl" style="left:1258px;top:390px">Container</div>
<div class="bx" style="left:1350px;top:389px;width:90px;height:60px;"></div>
<div class="cl" style="left:1351px;top:390px">Container</div>
<div class="a" style="left:516px;top:449px;width:930px;height:1px;background:#d5d5d5"></div>
<div class="a" style="left:545px;top:404px;width:4px;height:1px;background:#333"></div>
<div class="a" style="left:652px;top:405px;width:4px;height:3px;background:#aaa"></div>
<div class="bx" style="left:509px;top:484px;width:942px;height:89px;"></div>
<div class="cl" style="left:510px;top:485px">Paginator</div>
<div class="t" style="left:1105px;top:524px;font-size:12px;color:#757575">Items per page:</div>
<div class="a" style="left:1196px;top:517px;width:44px;height:25px;border:1px solid #cfcfcf;border-radius:4px"></div>
<div class="t" style="left:1201px;top:523px;font-size:12.5px;color:#333">10</div>
<div class="a" style="left:1222px;top:527px;width:0;height:0;border-left:5px solid transparent;border-right:5px solid transparent;border-top:5px solid #555"></div>
<div class="t" style="left:1277px;top:523px;font-size:12px;color:#757575">1 &ndash; 1 of 1</div>
<svg class="a" style="left:1374px;top:521px" width="60" height="15" viewBox="0 0 60 15"><path d="M9 1L3 7.5 9 14" fill="none" stroke="#b5b5b5" stroke-width="2"/><path d="M43 1l6 6.5-6 6.5" fill="none" stroke="#b5b5b5" stroke-width="2"/></svg>
<div class="a" style="left:393px;top:611px;width:1171px;height:33px;background:#f4f4f4"></div>
<div class="a" style="left:399px;top:616px;width:114px;height:28px;background:#6db6e1"></div>
<svg class="a" style="left:410px;top:624px" width="19" height="13" viewBox="0 0 19 13"><path d="M5 1.5L1 6.5 5 11.5M14 1.5l4 5-4 5M11 .5L8 12.5" fill="none" stroke="#fff" stroke-width="1.6"/></svg>
<div class="t" style="left:446px;top:625px;font-size:14px;color:#fff">Template</div>
<div class="a" style="left:518px;top:616px;width:126px;height:28px;background:#ececec;border:1px solid #b8b8b8;border-bottom:none"></div>
<svg class="a" style="left:529px;top:623px" width="16" height="16" viewBox="0 0 16 16"><circle cx="8" cy="8" r="4.3" fill="none" stroke="#777" stroke-width="3"/><g stroke="#777" stroke-width="2.6"><path d="M8 0v4M8 12v4M0 8h4M12 8h4M2.3 2.3l2.6 2.6M11.1 11.1l2.6 2.6M2.3 13.7l2.6-2.6M11.1 4.9l2.6-2.6"/></g></svg>
<div class="t" style="left:560px;top:625px;font-size:14px;color:#777">Component</div>
<div class="a" style="left:649px;top:616px;width:124px;height:28px;background:#ececec;border:1px solid #b8b8b8;border-bottom:none"></div>
<svg class="a" style="left:660px;top:623px" width="19" height="15" viewBox="0 0 19 15"><rect x="1" y="1" width="17" height="13" fill="none" stroke="#777" stroke-width="1.6"/><path d="M3 12l4-5 3 3 2-2 4 4z" fill="#777"/><circle cx="5.5" cy="4.5" r="1.5" fill="#777"/></svg>
<div class="t" style="left:695px;top:625px;font-size:14px;color:#777">Styles</div>
<svg class="a" style="left:746px;top:623px" width="16" height="16" viewBox="0 0 16 16"><path d="M13.5 6A6 6 0 0 0 2.5 5M2.5 10a6 6 0 0 0 11 1" fill="none" stroke="#999" stroke-width="2.2"/><path d="M15 1.5v6h-6zM1 14.5v-6h6z" fill="#999"/></svg>
<div class="a" style="left:1394px;top:616px;width:165px;height:28px;background:#ececec;border:1px solid #b8b8b8;border-bottom:none"></div>
<svg class="a" style="left:1404px;top:622px" width="10" height="17" viewBox="0 0 10 17"><path d="M3 0h6L6 6h3L2 17l2-8H1z" fill="#8a8a8a"/></svg>
<div class="t" style="left:1434px;top:625px;font-size:14px;color:#777">Live Preview Logs</div>
<div class="a" style="left:393px;top:644px;width:1171px;height:5px;background:#0095da"></div>
<div class="a" style="left:393px;top:649px;width:1171px;height:262px;background:#fff;overflow:hidden">
<div class="ln" style="left:-1px;top:-10.5px">28</div>
<div class="a" style="left:60.4px;top:-10.5px;width:1px;height:19px;background:#d3d3d3"></div>
<div class="a" style="left:91.2px;top:-10.5px;width:1px;height:19px;background:#d3d3d3"></div>
<div class="a" style="left:122.0px;top:-10.5px;width:1px;height:19px;background:#d3d3d3"></div>
<div class="a" style="left:152.8px;top:-10.5px;width:1px;height:19px;background:#d3d3d3"></div>
<div class="a" style="left:183.6px;top:-10.5px;width:1px;height:19px;background:#d3d3d3"></div>
<div class="a" style="left:214.4px;top:-10.5px;width:1px;height:19px;background:#d3d3d3"></div>
<div class="a" style="left:245.2px;top:-10.5px;width:1px;height:19px;background:#d3d3d3"></div>
<div class="code" style="left:276.0px;top:-10.5px"><span class="pn">&lt;/</span><span class="tg">c-container</span><span class="pn">&gt;</span></div>
<div class="ln" style="left:-1px;top:8.5px">29</div>
<div class="a" style="left:60.4px;top:8.5px;width:1px;height:19px;background:#d3d3d3"></div>
<div class="a" style="left:91.2px;top:8.5px;width:1px;height:19px;background:#d3d3d3"></div>
<div class="a" style="left:122.0px;top:8.5px;width:1px;height:19px;background:#d3d3d3"></div>
<div class="a" style="left:152.8px;top:8.5px;width:1px;height:19px;background:#d3d3d3"></div>
<div class="a" style="left:183.6px;top:8.5px;width:1px;height:19px;background:#d3d3d3"></div>
<div class="a" style="left:214.4px;top:8.5px;width:1px;height:19px;background:#d3d3d3"></div>
<div class="code" style="left:245.2px;top:8.5px"><span class="pn">&lt;/</span><span class="tg">mat-cell</span><span class="pn">&gt;</span></div>
<div class="ln" style="left:-1px;top:27.5px">30</div>
<div class="a" style="left:60.4px;top:27.5px;width:1px;height:19px;background:#d3d3d3"></div>
<div class="a" style="left:91.2px;top:27.5px;width:1px;height:19px;background:#d3d3d3"></div>
<div class="a" style="left:122.0px;top:27.5px;width:1px;height:19px;background:#d3d3d3"></div>
<div class="a" style="left:152.8px;top:27.5px;width:1px;height:19px;background:#d3d3d3"></div>
<div class="a" style="left:183.6px;top:27.5px;width:1px;height:19px;background:#d3d3d3"></div>
<div class="code" style="left:214.4px;top:27.5px"><span class="pn">&lt;/</span><span class="tg">ng-container</span><span class="pn">&gt;</span></div>
<div class="ln" style="left:-1px;top:46.5px">31</div>
<div class="a" style="left:60.4px;top:46.5px;width:1px;height:19px;background:#d3d3d3"></div>
<div class="a" style="left:91.2px;top:46.5px;width:1px;height:19px;background:#d3d3d3"></div>
<div class="a" style="left:122.0px;top:46.5px;width:1px;height:19px;background:#d3d3d3"></div>
<div class="a" style="left:152.8px;top:46.5px;width:1px;height:19px;background:#d3d3d3"></div>
<div class="a" style="left:183.6px;top:46.5px;width:1px;height:19px;background:#d3d3d3"></div>
<div class="code" style="left:214.4px;top:46.5px"><span class="pn">&lt;</span><span class="tg">ng-container</span> <span class="at">id</span>=<span class="av">&quot;table-column.3&quot;</span> [<span class="at">magic</span>]=<span class="av">&quot;mgc.Column_First_Name&quot;</span> [<span class="at">matColumnDef</span>]=<span class="av">&quot;mgc.Column_First_Name&quot;</span> <span class="at">data-comp-id</span>=<span class="av">&quot;table-column.3&quot;</span><span class="pn">&gt;</span></div>
<div class="ln" style="left:-1px;top:65.5px">32</div>
<div class="a" style="left:60.4px;top:65.5px;width:1px;height:19px;background:#d3d3d3"></div>
<div class="a" style="left:91.2px;top:65.5px;width:1px;height:19px;background:#d3d3d3"></div>
<div class="a" style="left:122.0px;top:65.5px;width:1px;height:19px;background:#d3d3d3"></div>
<div class="a" style="left:152.8px;top:65.5px;width:1px;height:19px;background:#d3d3d3"></div>
<div class="a" style="left:183.6px;top:65.5px;width:1px;height:19px;background:#d3d3d3"></div>
<div class="a" style="left:214.4px;top:65.5px;width:1px;height:19px;background:#d3d3d3"></div>
<div class="code" style="left:245.2px;top:65.5px"><span class="pn">&lt;</span><span class="tg">mat-header-cell</span> *<span class="at">matHeaderCellDef</span> <span class="at">data-comp-id</span>=<span class="av">&quot;table-header-cell.3&quot;</span><span class="pn">&gt;</span>{{ mg.getText(mgc.Column_First_Name) }}<span class="pn">&lt;/</span><span class="tg">mat-header-cell</span><span class="pn">&gt;</span></div>
<div class="ln" style="left:-1px;top:84.5px">33</div>
<div class="a" style="left:60.4px;top:84.5px;width:1px;height:19px;background:#d3d3d3"></div>
<div class="a" style="left:91.2px;top:84.5px;width:1px;height:19px;background:#d3d3d3"></div>
<div class="a" style="left:122.0px;top:84.5px;width:1px;height:19px;background:#d3d3d3"></div>
<div class="a" style="left:152.8px;top:84.5px;width:1px;height:19px;background:#d3d3d3"></div>
<div class="a" style="left:183.6px;top:84.5px;width:1px;height:19px;background:#d3d3d3"></div>
<div class="a" style="left:214.4px;top:84.5px;width:1px;height:19px;background:#d3d3d3"></div>
<div class="code" style="left:245.2px;top:84.5px"><span class="pn">&lt;</span><span class="tg">mat-cell</span> *<span class="at">matCellDef</span>=<span class="av">&quot;let row&quot;</span> <span class="at">magicMark</span>=<span class="av">&quot;magicTableRowContainer&quot;</span> <span class="at">data-comp-id</span>=<span class="av">&quot;column-cell.3&quot;</span><span class="pn">&gt;</span></div>
<div class="ln" style="left:-1px;top:103.5px">34</div>
<div class="a" style="left:60.4px;top:103.5px;width:1px;height:19px;background:#d3d3d3"></div>
<div class="a" style="left:91.2px;top:103.5px;width:1px;height:19px;background:#d3d3d3"></div>
<div class="a" style="left:122.0px;top:103.5px;width:1px;height:19px;background:#d3d3d3"></div>
<div class="a" style="left:152.8px;top:103.5px;width:1px;height:19px;background:#d3d3d3"></div>
<div class="a" style="left:183.6px;top:103.5px;width:1px;height:19px;background:#d3d3d3"></div>
<div class="a" style="left:214.4px;top:103.5px;width:1px;height:19px;background:#d3d3d3"></div>
<div class="a" style="left:245.2px;top:103.5px;width:1px;height:19px;background:#d3d3d3"></div>
<div class="code" style="left:276.0px;top:103.5px"><span class="pn">&lt;</span><span class="tg">c-container</span> #<span class="at">matCell</span> [<span class="at">formGroup</span>]=<span class="av">&quot;mg.getFormGroupByRow(row.rowId)&quot;</span> *<span class="at">ngIf</span>=<span class="av">&quot;mg.ifRowCreated(row)&quot;</span> <span class="at">data-comp-id</span>=<span class="av">&quot;c-container.3&quot;</span><span class="pn">&gt;</span></div>
<div class="ln" style="left:-1px;top:122.5px">35</div>
<div class="a" style="left:60.4px;top:122.5px;width:1px;height:19px;background:#d3d3d3"></div>
<div class="a" style="left:91.2px;top:122.5px;width:1px;height:19px;background:#d3d3d3"></div>
<div class="a" style="left:122.0px;top:122.5px;width:1px;height:19px;background:#d3d3d3"></div>
<div class="a" style="left:152.8px;top:122.5px;width:1px;height:19px;background:#d3d3d3"></div>
<div class="a" style="left:183.6px;top:122.5px;width:1px;height:19px;background:#d3d3d3"></div>
<div class="a" style="left:214.4px;top:122.5px;width:1px;height:19px;background:#d3d3d3"></div>
<div class="a" style="left:245.2px;top:122.5px;width:1px;height:19px;background:#d3d3d3"></div>
<div class="a" style="left:276.0px;top:122.5px;width:1px;height:19px;background:#d3d3d3"></div>
<div class="code" style="left:306.8px;top:122.5px"><span class="pn">&lt;</span><span class="tg">label</span> <span class="at">data-comp-id</span>=<span class="av">&quot;label.3&quot;</span> <span class="at">id</span>=<span class="av">&quot;label.3&quot;</span> [<span class="at">magic</span>]=<span class="av">&quot;mgc.First_Name&quot;</span> [<span class="at">rowId</span>]=<span class="av">&quot;row.rowId&quot;</span><span class="pn">&gt;</span>{{ mg.getValue(mgc.First_Name,row.rowId) }}<span class="pn">&lt;/</span><span class="tg">label</span><span class="pn">&gt;</span></div>
<div class="ln" style="left:-1px;top:141.5px">36</div>
<div class="a" style="left:60.4px;top:141.5px;width:1px;height:19px;background:#d3d3d3"></div>
<div class="a" style="left:91.2px;top:141.5px;width:1px;height:19px;background:#d3d3d3"></div>
<div class="a" style="left:122.0px;top:141.5px;width:1px;height:19px;background:#d3d3d3"></div>
<div class="a" style="left:152.8px;top:141.5px;width:1px;height:19px;background:#d3d3d3"></div>
<div class="a" style="left:183.6px;top:141.5px;width:1px;height:19px;background:#d3d3d3"></div>
<div class="a" style="left:214.4px;top:141.5px;width:1px;height:19px;background:#d3d3d3"></div>
<div class="a" style="left:245.2px;top:141.5px;width:1px;height:19px;background:#d3d3d3"></div>
<div class="code" style="left:276.0px;top:141.5px"><span class="pn">&lt;/</span><span class="tg">c-container</span><span class="pn">&gt;</span></div>
<div class="ln" style="left:-1px;top:160.5px">37</div>
<div class="a" style="left:60.4px;top:160.5px;width:1px;height:19px;background:#d3d3d3"></div>
<div class="a" style="left:91.2px;top:160.5px;width:1px;height:19px;background:#d3d3d3"></div>
<div class="a" style="left:122.0px;top:160.5px;width:1px;height:19px;background:#d3d3d3"></div>
<div class="a" style="left:152.8px;top:160.5px;width:1px;height:19px;background:#d3d3d3"></div>
<div class="a" style="left:183.6px;top:160.5px;width:1px;height:19px;background:#d3d3d3"></div>
<div class="a" style="left:214.4px;top:160.5px;width:1px;height:19px;background:#d3d3d3"></div>
<div class="code" style="left:245.2px;top:160.5px"><span class="pn">&lt;/</span><span class="tg">mat-cell</span><span class="pn">&gt;</span></div>
<div class="ln" style="left:-1px;top:179.5px">38</div>
<div class="a" style="left:60.4px;top:179.5px;width:1px;height:19px;background:#d3d3d3"></div>
<div class="a" style="left:91.2px;top:179.5px;width:1px;height:19px;background:#d3d3d3"></div>
<div class="a" style="left:122.0px;top:179.5px;width:1px;height:19px;background:#d3d3d3"></div>
<div class="a" style="left:152.8px;top:179.5px;width:1px;height:19px;background:#d3d3d3"></div>
<div class="a" style="left:183.6px;top:179.5px;width:1px;height:19px;background:#d3d3d3"></div>
<div class="code" style="left:214.4px;top:179.5px"><span class="pn">&lt;/</span><span class="tg">ng-container</span><span class="pn">&gt;</span></div>
<div class="ln" style="left:-1px;top:198.5px">39</div>
<div class="a" style="left:60.4px;top:198.5px;width:1px;height:19px;background:#d3d3d3"></div>
<div class="a" style="left:91.2px;top:198.5px;width:1px;height:19px;background:#d3d3d3"></div>
<div class="a" style="left:122.0px;top:198.5px;width:1px;height:19px;background:#d3d3d3"></div>
<div class="a" style="left:152.8px;top:198.5px;width:1px;height:19px;background:#d3d3d3"></div>
<div class="a" style="left:183.6px;top:198.5px;width:1px;height:19px;background:#d3d3d3"></div>
<div class="code" style="left:214.4px;top:198.5px"><span class="pn">&lt;</span><span class="tg">ng-container</span> <span class="at">id</span>=<span class="av">&quot;table-column.4&quot;</span> [<span class="at">magic</span>]=<span class="av">&quot;mgc.Column_Last_Name&quot;</span> [<span class="at">matColumnDef</span>]=<span class="av">&quot;mgc.Column_Last_Name&quot;</span> <span class="at">data-comp-id</span>=<span class="av">&quot;table-column.4&quot;</span><span class="pn">&gt;</span></div>
<div class="ln" style="left:-1px;top:217.5px">40</div>
<div class="a" style="left:60.4px;top:217.5px;width:1px;height:19px;background:#d3d3d3"></div>
<div class="a" style="left:91.2px;top:217.5px;width:1px;height:19px;background:#d3d3d3"></div>
<div class="a" style="left:122.0px;top:217.5px;width:1px;height:19px;background:#d3d3d3"></div>
<div class="a" style="left:152.8px;top:217.5px;width:1px;height:19px;background:#d3d3d3"></div>
<div class="a" style="left:183.6px;top:217.5px;width:1px;height:19px;background:#d3d3d3"></div>
<div class="a" style="left:214.4px;top:217.5px;width:1px;height:19px;background:#d3d3d3"></div>
<div class="code" style="left:245.2px;top:217.5px"><span class="pn">&lt;</span><span class="tg">mat-header-cell</span> *<span class="at">matHeaderCellDef</span> <span class="at">data-comp-id</span>=<span class="av">&quot;table-header-cell.4&quot;</span><span class="pn">&gt;</span>{{ mg.getText(mgc.Column_Last_Name) }}<span class="pn">&lt;/</span><span class="tg">mat-header-cell</span><span class="pn">&gt;</span></div>
<div class="ln" style="left:-1px;top:236.5px">41</div>
<div class="a" style="left:60.4px;top:236.5px;width:1px;height:19px;background:#d3d3d3"></div>
<div class="a" style="left:91.2px;top:236.5px;width:1px;height:19px;background:#d3d3d3"></div>
<div class="a" style="left:122.0px;top:236.5px;width:1px;height:19px;background:#d3d3d3"></div>
<div class="a" style="left:152.8px;top:236.5px;width:1px;height:19px;background:#d3d3d3"></div>
<div class="a" style="left:183.6px;top:236.5px;width:1px;height:19px;background:#d3d3d3"></div>
<div class="a" style="left:214.4px;top:236.5px;width:1px;height:19px;background:#d3d3d3"></div>
<div class="code" style="left:245.2px;top:236.5px"><span class="pn">&lt;</span><span class="tg">mat-cell</span> *<span class="at">matCellDef</span>=<span class="av">&quot;let row&quot;</span> <span class="at">magicMark</span>=<span class="av">&quot;magicTableRowContainer&quot;</span> <span class="at">data-comp-id</span>=<span class="av">&quot;column-cell.4&quot;</span><span class="pn">&gt;</span></div>
<div class="ln" style="left:-1px;top:255.5px">42</div>
<div class="a" style="left:60.4px;top:255.5px;width:1px;height:19px;background:#d3d3d3"></div>
<div class="a" style="left:91.2px;top:255.5px;width:1px;height:19px;background:#d3d3d3"></div>
<div class="a" style="left:122.0px;top:255.5px;width:1px;height:19px;background:#d3d3d3"></div>
<div class="a" style="left:152.8px;top:255.5px;width:1px;height:19px;background:#d3d3d3"></div>
<div class="a" style="left:183.6px;top:255.5px;width:1px;height:19px;background:#d3d3d3"></div>
<div class="a" style="left:214.4px;top:255.5px;width:1px;height:19px;background:#d3d3d3"></div>
<div class="a" style="left:245.2px;top:255.5px;width:1px;height:19px;background:#d3d3d3"></div>
<div class="code" style="left:276.0px;top:255.5px"><span class="pn">&lt;</span><span class="tg">c-container</span> #<span class="at">matCell</span> [<span class="at">formGroup</span>]=<span class="av">&quot;mg.getFormGroupByRow(row.rowId)&quot;</span> *<span class="at">ngIf</span>=<span class="av">&quot;mg.ifRowCreated(row)&quot;</span> <span class="at">data-comp-id</span>=<span class="av">&quot;c-container.4&quot;</span><span class="pn">&gt;</span></div>
<div class="a" style="left:1166px;top:0;width:5px;height:262px;border-left:1px solid #e2e2e2"></div>
<div class="a" style="left:1166px;top:85px;width:5px;height:41px;background:rgba(120,120,120,.4)"></div>
<div class="a" style="left:60px;top:257px;width:912px;height:5px;background:rgba(120,120,120,.45)"></div>
</div>
<div class="a" style="left:1564px;top:50px;width:6px;height:861px;background:#dadada;border-left:1px solid #a0a0a0;border-right:1px solid #a0a0a0"></div>
<div class="a" style="left:1575px;top:55px;width:96px;height:28px;background:#ededed;border:1px solid #b8b8b8;border-bottom:none"></div>
<svg class="a" style="left:1586px;top:60px" width="16" height="19" viewBox="0 0 16 19"><ellipse cx="8" cy="3.5" rx="8" ry="3.2" fill="#777"/><path d="M0 6c0 4 16 4 16 0v3.5c0 4-16 4-16 0zM0 11c0 4 16 4 16 0v4c0 4-16 4-16 0z" fill="#777"/></svg>
<div class="a" style="left:1618px;top:55px;width:42px;height:28px;overflow:hidden"><div class="t" style="left:0;top:9px;font-size:14.5px;color:#888">Models</div></div>
<div class="a" style="left:1676px;top:55px;width:97px;height:28px;background:#ededed;border:1px solid #b8b8b8;border-bottom:none"></div>
<svg class="a" style="left:1687px;top:62px" width="18" height="15" viewBox="0 0 18 15"><rect x="6.5" y="0" width="5" height="4" fill="#777"/><path d="M9 4v3M3 10V7h12v3" fill="none" stroke="#777" stroke-width="1.5"/><rect x="0" y="10" width="5" height="5" fill="#777"/><rect x="6.5" y="10" width="5" height="5" fill="#777"/><rect x="13" y="10" width="5" height="5" fill="#777"/></svg>
<div class="a" style="left:1721px;top:55px;width:41px;height:28px;overflow:hidden"><div class="t" style="left:0;top:9px;font-size:14.5px;color:#888">Outline</div></div>
<div class="a" style="left:1778px;top:55px;width:142px;height:28px;background:#6db6e1"></div>
<svg class="a" style="left:1789px;top:61px" width="19" height="15" viewBox="0 0 19 15"><g fill="#fff"><rect x="0" y="0" width="3" height="3"/><rect x="4" y="0" width="15" height="3"/><rect x="0" y="4" width="3" height="3"/><rect x="4" y="4" width="15" height="3"/><rect x="0" y="8" width="3" height="3"/><rect x="4" y="8" width="15" height="3"/><rect x="0" y="12" width="3" height="3"/><rect x="4" y="12" width="15" height="3"/></g></svg>
<div class="a" style="left:1823px;top:55px;width:86px;height:28px;overflow:hidden"><div class="t" style="left:0;top:9px;font-size:14.5px;color:#fff">PropertySheet</div></div>
<div class="a" style="left:1570px;top:83px;width:350px;height:5px;background:#0095da"></div>
<div class="a" style="left:1570px;top:88px;width:350px;height:32px;background:#d7d7d7"></div>
<div class="t" style="left:1580px;top:97px;font-size:14px;color:#111">Label</div>
<svg class="a" style="left:1897px;top:97px" width="13" height="14" viewBox="0 0 13 14"><path d="M4 3V2a2 1.6 0 0 1 5 0v1" fill="none" stroke="#0a8fdc" stroke-width="1.3"/><rect x="0" y="2.8" width="13" height="1.5" fill="#0a8fdc"/><path d="M1.5 4v8.5a1.5 1.5 0 0 0 1.5 1.5h7a1.5 1.5 0 0 0 1.5-1.5V4z" fill="#0a8fdc"/><g fill="#d7d7d7"><rect x="3.5" y="5.5" width="1" height="6"/><rect x="5.6" y="5.5" width="1" height="6"/><rect x="7.6" y="5.5" width="1" height="6"/><rect x="9" y="5.5" width=".6" height="6"/></g></svg>
<div class="rh" style="top:120px"><div class="tri" style="left:8px;top:7px"></div><b>Events &amp; Data</b></div>
<div class="pl" style="left:1560px;width:94px;top:153px">Data Mapping</div>
<div class="inp" style="left:1661px;top:150px;width:251px">
<span>mgc.First_Name</span>
<div class="gb"><svg class="a" style="left:3px;top:3px" width="12" height="12" viewBox="0 0 12 12"><circle cx="6" cy="6" r="3" fill="none" stroke="#111" stroke-width="2.2"/><g stroke="#111" stroke-width="2.2"><path d="M6 0v3M6 9v3M0 6h3M9 6h3M1.8 1.8l2 2M8.2 8.2l2 2M1.8 10.2l2-2M8.2 3.8l2-2"/></g></svg></div>
</div>
<div class="pl" style="left:1560px;width:94px;top:177px">Text</div>
<div class="inp" style="left:1661px;top:174px;width:251px">
<span>{{ mg.getValue(mgc.First_Name,row.ro</span>
<div class="gb"><svg class="a" style="left:3px;top:3px" width="12" height="12" viewBox="0 0 12 12"><circle cx="6" cy="6" r="3" fill="none" stroke="#111" stroke-width="2.2"/><g stroke="#111" stroke-width="2.2"><path d="M6 0v3M6 9v3M0 6h3M9 6h3M1.8 1.8l2 2M8.2 8.2l2 2M1.8 10.2l2-2M8.2 3.8l2-2"/></g></svg></div>
</div>
<div class="pl" style="left:1560px;width:94px;top:201px">Id</div>
<div class="inp" style="left:1661px;top:198px;width:251px">
<span>label.3</span>
</div>
<div class="rh" style="top:230px"><div class="tri" style="left:8px;top:7px"></div><b>Table Actions</b></div>
<div class="pl" style="left:1578px;top:263px;text-align:left">Is Inside Table</div>
<div class="a" style="left:1663px;top:262px;width:16px;height:16px;background:#1a78f0;border-radius:2px"></div>
<svg class="a" style="left:1665px;top:264px" width="12" height="12" viewBox="0 0 12 12"><path d="M1.5 6.5l3 3 6-7" fill="none" stroke="#fff" stroke-width="2"/></svg>
<div class="inp" style="left:1663px;top:281px;width:249px"><span>None</span><div class="dd"></div></div>
<div class="pl" style="left:1560px;width:94px;top:285px">Show Control</div>
<div class="a" style="left:1556px;top:212px;width:232px;height:89px;border:10px solid #fdcd3f"></div>
<div class="rh" style="top:313px"><div class="tri" style="left:8px;top:7px"></div><b>Display Logic</b></div>
<div class="pl" style="left:1560px;width:123px;top:346px">Is Visible</div>
<div class="inp" style="left:1691px;top:343px;width:221px">
<div class="gb"><svg class="a" style="left:3px;top:3px" width="12" height="12" viewBox="0 0 12 12"><circle cx="6" cy="6" r="3" fill="none" stroke="#111" stroke-width="2.2"/><g stroke="#111" stroke-width="2.2"><path d="M6 0v3M6 9v3M0 6h3M9 6h3M1.8 1.8l2 2M8.2 8.2l2 2M1.8 10.2l2-2M8.2 3.8l2-2"/></g></svg></div>
</div>
<div class="pl" style="left:1560px;width:123px;top:370px">Display If</div>
<div class="inp" style="left:1691px;top:367px;width:221px">
<div class="gb"><svg class="a" style="left:3px;top:3px" width="12" height="12" viewBox="0 0 12 12"><circle cx="6" cy="6" r="3" fill="none" stroke="#111" stroke-width="2.2"/><g stroke="#111" stroke-width="2.2"><path d="M6 0v3M6 9v3M0 6h3M9 6h3M1.8 1.8l2 2M8.2 8.2l2 2M1.8 10.2l2-2M8.2 3.8l2-2"/></g></svg></div>
</div>
<div class="pl" style="left:1560px;width:123px;top:394px">Tooltip</div>
<div class="inp" style="left:1691px;top:391px;width:221px">
<div class="gb"><svg class="a" style="left:3px;top:3px" width="12" height="12" viewBox="0 0 12 12"><circle cx="6" cy="6" r="3" fill="none" stroke="#111" stroke-width="2.2"/><g stroke="#111" stroke-width="2.2"><path d="M6 0v3M6 9v3M0 6h3M9 6h3M1.8 1.8l2 2M8.2 8.2l2 2M1.8 10.2l2-2M8.2 3.8l2-2"/></g></svg></div>
</div>
<div class="pl" style="left:1560px;width:123px;top:418px">Text Wrap</div>
<div class="inp" style="left:1691px;top:415px;width:221px">
<div class="dd"></div>
</div>
<div class="pl" style="left:1560px;width:123px;top:442px">Text Transformation</div>
<div class="inp" style="left:1691px;top:439px;width:221px">
<span>Default</span>
<div class="dd"></div>
</div>
<div class="pl" style="left:1560px;width:123px;top:466px">Dropdown Type</div>
<div class="inp" style="left:1691px;top:463px;width:221px">
<span>Default</span>
<div class="dd"></div>
</div>
<div class="rh" style="top:495px"><div class="tri" style="left:8px;top:7px"></div><b>Styling Overrides</b></div>
<div class="pl" style="left:1578px;top:529px;text-align:left">Class</div>
<div class="inp" style="left:1616px;top:525px;width:296px;height:30px"><span style="top:8px;left:7px;color:#777;font-size:13.5px">Select class...</span></div>
<div class="rh" style="top:573px"><div class="tri" style="left:8px;top:7px"></div><b>Dynamic Properties</b></div>
<svg class="a" style="left:1579px;top:605px" width="15" height="15" viewBox="0 0 15 15"><path d="M7.5 1v13M1 7.5h13" stroke="#111" stroke-width="3"/></svg>
<div class="t" style="left:1600px;top:606px;font-size:13.5px;color:#111">Add New Property</div>
</body></html>
